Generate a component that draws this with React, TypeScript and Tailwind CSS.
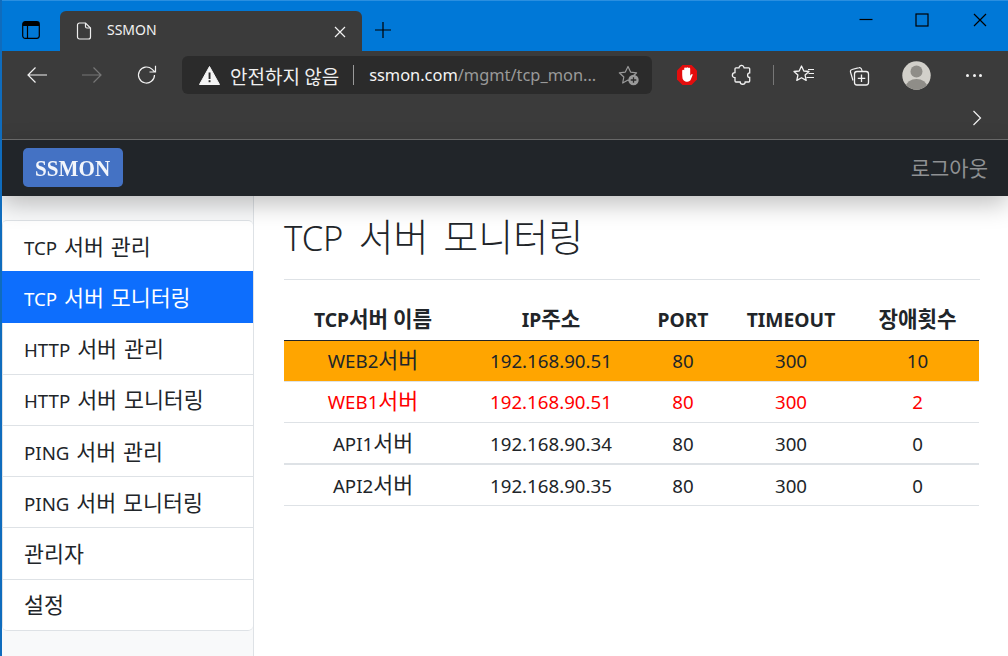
import React from "react";

const FONT = { fontFamily: '"Noto Sans", "Noto Sans CJK KR", sans-serif' };
const KR = { fontFamily: '"Noto Sans CJK KR", sans-serif' };

const Ico = ({ w = 24, h = 24, vb = "0 0 24 24", children, className = "" }: any) => (
  <svg width={w} height={h} viewBox={vb} fill="none" stroke="currentColor" strokeWidth={1.2} className={className}>
    {children}
  </svg>
);

// Hangul in the reference is set larger than the Latin beside it.
const T = ({ t, k = "text-[1.16em]" }: { t: string; k?: string }) => (
  <>
    {t.split(/([가-힣]+)/).map((s, i) =>
      /[가-힣]/.test(s) ? (
        <span key={i} className={`${k} leading-none`} style={KR}>{s}</span>
      ) : (
        <span key={i}>{s}</span>
      )
    )}
  </>
);

const menu = ["TCP 서버 관리", "TCP 서버 모니터링", "HTTP 서버 관리", "HTTP 서버 모니터링", "PING 서버 관리", "PING 서버 모니터링", "관리자", "설정"];

const rows = [
  { name: "WEB2서버", ip: "192.168.90.51", port: "80", to: "300", n: "10", cls: "bg-[#ffa500] text-[#212529] border-b", h: "h-[41px]" },
  { name: "WEB1서버", ip: "192.168.90.51", port: "80", to: "300", n: "2", cls: "text-[#ff0000] border-b", h: "h-[41px]" },
  { name: "API1서버", ip: "192.168.90.34", port: "80", to: "300", n: "0", cls: "text-[#212529] border-b-2", h: "h-[42px]" },
  { name: "API2서버", ip: "192.168.90.35", port: "80", to: "300", n: "0", cls: "text-[#212529] border-b", h: "h-[41px]" },
];

const itemHeight = (i: number) => (i === 0 ? "h-[50.250px] " : i === 1 ? "h-[52px] " : i === 7 ? "h-[50.500px] " : "h-[51.250px] ");

export default function App() {
  return (
    <div className="w-[1008px] h-[656px] overflow-hidden flex flex-col border-l-2 border-[#0f6cbd] bg-white" style={FONT}>
      {/* Tab strip */}
      <div className="h-[51px] shrink-0 bg-[#0078d7] border-t border-[#2a8fe0] flex items-end text-white">
        <div className="w-[58px] h-[50px] flex items-center justify-center pt-[8px] text-black">
          <Ico w={18} h={18} vb="0 0 18 18">
            <rect x="0.7" y="0.7" width="16.6" height="16.6" rx="2.5" fill="#0078d7" stroke="#000" strokeWidth="1.2" />
            <path d="M1 1h16v4H1z" fill="#000" stroke="none" />
            <path d="M5.5 5v12" stroke="#000" />
          </Ico>
        </div>
        <div className="w-[302px] h-[40px] bg-[#3b3b3b] rounded-t-[6px] flex items-center pl-[16px] pr-[14px] text-[#f2f2f2]">
          <Ico w={16} h={18} vb="0 0 16 18" className="mr-[15px] text-[#eeeeee]">
            <path d="M1.5 3a2 2 0 0 1 2-2h6l5 5v9a2 2 0 0 1-2 2h-9a2 2 0 0 1-2-2z" />
            <path d="M9.5 1v3.5a1.5 1.5 0 0 0 1.5 1.5h3.5" />
          </Ico>
          <span className="text-[14px] leading-none flex-1 mt-[-2px]">SSMON</span>
          <Ico w={12} h={12} vb="0 0 12 12" className="mr-[2px] mt-[2px]">
            <path d="M1 1l10 10M11 1L1 11" />
          </Ico>
        </div>
        <div className="h-[50px] w-[40px] flex items-center justify-center pt-[8px] text-black">
          <Ico w={18} h={18} vb="0 0 18 18" className="ml-[2px]">
            <path d="M9 1v16M1 9h16" />
          </Ico>
        </div>
        <div className="flex-1" />
        <div className="h-[50px] flex items-start text-black pt-[12px] pr-[21px]">
          <Ico w={14} h={14} vb="0 0 14 14" className="mr-[42px]">
            <path d="M0.5 6.5h13" />
          </Ico>
          <Ico w={14} h={14} vb="0 0 14 14" className="mr-[44px]">
            <rect x="1" y="1" width="12" height="12" />
          </Ico>
          <Ico w={14} h={14} vb="0 0 14 14" className="">
            <path d="M1 1l12 12M13 1L1 13" />
          </Ico>
        </div>
      </div>

      {/* Address toolbar */}
      <div className="h-[49px] shrink-0 bg-[#3b3b3b] flex items-center text-[#f2f2f2] pb-[1px]">
        <Ico w={22} h={18} vb="0 0 22 18" className="ml-[24px]">
          <path d="M21 9H2M9.5 1.5L2 9l7.5 7.5" />
        </Ico>
        <Ico w={22} h={18} vb="0 0 22 18" className="ml-[33px] text-[#777777]">
          <path d="M1 9h19M12.5 1.5L20 9l-7.5 7.5" />
        </Ico>
        <Ico w={22} h={22} vb="0 0 22 22" className="ml-[33px]">
          <path d="M18.5 11a8 8 0 1 1-2.6-5.9l3.1 2.9M19.5 1.8V8h-6" />
        </Ico>
        <div className="ml-[24px] w-[470px] h-[38px] rounded-[6px] bg-[#2b2b2b] flex items-center pl-[17px] pr-[12px]">
          <svg width="21" height="19" viewBox="0 0 21 19" className="shrink-0">
            <path d="M10.5 0.5L20.5 18.5H0.5z" fill="#f5f5f5" stroke="#f5f5f5" strokeLinejoin="round" />
            <rect x="9.6" y="6.5" width="1.9" height="6.5" fill="#2b2b2b" />
            <rect x="9.6" y="14.2" width="1.9" height="2" fill="#2b2b2b" />
          </svg>
          <span className="ml-[10px] text-[19px] leading-none text-[#f0f0f0] whitespace-nowrap" style={KR}>안전하지 않음</span>
          <span className="ml-[14px] w-[1px] h-[20px] bg-[#9a9a9a] shrink-0" />
          <span className="ml-[15px] text-[16.4px] leading-normal whitespace-nowrap flex-1">
            <span className="text-[#f5f5f5]">ssmon.com</span>
            <span className="text-[#9a9a9a]">/mgmt/tcp_mon...</span>
          </span>
          <svg width="22" height="21" viewBox="0 0 22 21" fill="none" className="shrink-0">
            <path d="M10 1.5l2.6 5.6 6 .7-4.4 4.2 1.1 6-5.3-3-5.3 3 1.1-6L1.300 7.800l6-.7z" stroke="#9a9a9a" strokeWidth="1.200" strokeLinejoin="round" />
            <circle cx="15.500" cy="15" r="5.200" fill="#9a9a9a" />
            <path d="M15.500 12.200v5.600M12.700 15h5.600" stroke="#2b2b2b" strokeWidth="1.300" />
          </svg>
        </div>
        <svg width="22" height="22" viewBox="0 0 22 22" className="ml-[24px] shrink-0">
          <path d="M6.500 1h9L21 6.500v9L15.500 21h-9L1 15.500v-9z" fill="#e30d0d" />
          <path d="M6.200 11V6.800a1.100 1.100 0 0 1 2-.5V4.500a1.100 1.100 0 0 1 2-.6 1.100 1.100 0 0 1 2 .2 1.100 1.100 0 0 1 2 .8v7.200c.4-1 1-2 2-2 .5.200.5.800.2 1.400l-1.600 4c-.6 1.400-1.800 2.200-3.400 2.200-2.900 0-5-1.800-5-4.500z" fill="#fff" />
        </svg>
        <Ico w={22} h={22} vb="0 0 22 22" className="ml-[33px] shrink-0">
          <path d="M8 3.300a2.500 2.500 0 0 1 4.800-.8l.3.8h4.600c.6 0 1 .4 1 1v4c-2.800 0-2.800 4.700 0 4.700v3.500c0 .6-.4 1-1 1h-3.500c0 3-5 3-5 0H5c-.6 0-1-.4-1-1v-3.300c-3.500 0-3.500-5 0-5V4.300c0-.6.400-1 1-1z" strokeWidth="1.300" transform="translate(0 0.500)" />
        </Ico>
        <span className="ml-[20px] w-[1px] h-[20px] bg-[#777777] shrink-0" />
        <Ico w={22} h={22} vb="0 0 22 22" className="ml-[19px] shrink-0">
          <path d="M8.500 2l2.300 5 5.200.5-3.900 3.600 1.100 5.300-4.700-2.700-4.700 2.700 1.100-5.300L1 7.500l5.200-.5z" strokeLinejoin="round" strokeWidth="1.300" />
          <path d="M15 5.500h6M15.500 9.500h5.500M13.500 13.500H21" strokeWidth="1.200" />
        </Ico>
        <Ico w={22} h={22} vb="0 0 22 22" className="ml-[33px] shrink-0">
          <path d="M5 16.500L2.500 8A2 2 0 0 1 4 5.500l7-1.800a2 2 0 0 1 2.500 1.500l.6 2" strokeWidth="1.200" />
          <rect x="6.500" y="7.500" width="14" height="13.500" rx="2.500" strokeWidth="1.300" />
          <path d="M13.500 10.500v7.500M9.800 14.300h7.500" strokeWidth="1.300" />
        </Ico>
        <svg width="29" height="29" viewBox="0 0 29 29" className="ml-[32px] shrink-0">
          <defs>
            <clipPath id="av"><circle cx="14.500" cy="14.500" r="14.200" /></clipPath>
          </defs>
          <circle cx="14.500" cy="14.500" r="14.200" fill="#d2d0ca" />
          <g clipPath="url(#av)">
            <circle cx="14.500" cy="10.500" r="6" fill="#8f8d88" />
            <ellipse cx="14.500" cy="25.500" rx="10.500" ry="7.500" fill="#8f8d88" />
          </g>
        </svg>
        <div className="ml-[35px] flex gap-[3.500px] shrink-0">
          <span className="w-[3px] h-[3px] rounded-full bg-[#f2f2f2]" />
          <span className="w-[3px] h-[3px] rounded-full bg-[#f2f2f2]" />
          <span className="w-[3px] h-[3px] rounded-full bg-[#f2f2f2]" />
        </div>
      </div>

      {/* Favourites bar */}
      <div className="h-[40px] shrink-0 bg-[#3b3b3b] border-b border-[#6e6e6e] flex items-center justify-end pr-[26px] text-[#f2f2f2]">
        <Ico w={10} h={16} vb="0 0 10 16" className="mb-[4px]">
          <path d="M1.500 1l7 7-7 7" />
        </Ico>
      </div>

      {/* Navbar */}
      <nav className="relative z-10 h-[56px] shrink-0 bg-[#212529] flex items-center justify-between pl-[21px] pr-[20px] shadow-[0_8px_24px_rgba(0,0,0,0.25)]">
        <div className="w-[100px] h-[39px] mt-[-1px] rounded-[5px] bg-[#4472c4] flex items-center justify-center">
          <span className="text-[#f2f5fb] text-[24px] font-bold leading-none blur-[0.5px] scale-x-[0.88]" style={{ fontFamily: '"Liberation Serif", serif' }}>SSMON</span>
        </div>
        <span className="text-[21px] leading-none text-[#8f9193] mb-[1px]" style={KR}>로그아웃</span>
      </nav>

      {/* Body */}
      <div className="flex-1 flex min-h-0">
        <aside className="w-[252px] shrink-0 bg-[#f8f9fa] border-r border-[#dee2e6] pt-[24px]">
          <div className="bg-white border-y border-[#dee2e6] rounded-[5px] overflow-hidden text-[18.7px] text-[#212529] [word-spacing:2px]">
            {menu.map((m, i) => (
              <div
                key={m}
                className={
                  "flex items-center leading-none " +
                  itemHeight(i) +
                  (i === 1 ? "bg-[#0d6efd] text-white pl-[22px] " : "border-l border-[#dee2e6] pl-[21px] ") +
                  (i >= 2 ? "border-b last:border-b-0 " : "")
                }
              >
                <span><T t={m} /></span>
              </div>
            ))}
          </div>
        </aside>

        <main className="flex-1 min-w-0 pl-[30px] pr-[28px]">
          <h1 className="h-[84px] border-b border-[#dee2e6] text-[34.500px] font-light leading-none text-[#212529] pt-[20px] [word-spacing:6px]">
            <T t="TCP 서버 모니터링" k="text-[38px]" />
          </h1>
          <table className="w-[695px] mt-[19px] table-fixed border-collapse text-center text-[18.700px] text-[#212529]">
            <colgroup>
              <col className="w-[178px]" />
              <col className="w-[178px]" />
              <col className="w-[86px]" />
              <col className="w-[130px]" />
              <col className="w-[123px]" />
            </colgroup>
            <thead>
              <tr className="h-[41px] border-b border-[#212529] font-bold text-[19.300px]">
                <th className="pt-[2px]"><T t="TCP서버 이름" k="text-[1.1em]" /></th>
                <th className="pt-[2px]"><T t="IP주소" k="text-[1.1em]" /></th>
                <th className="pt-[2px]">PORT</th>
                <th className="pt-[2px]">TIMEOUT</th>
                <th className="pt-[2px]"><T t="장애횟수" k="text-[1.1em]" /></th>
              </tr>
            </thead>
            <tbody>
              {rows.map((r) => (
                <tr key={r.name} className={`${r.h} border-[#dee2e6] ${r.cls}`}>
                  <td className="pt-[2px]"><T t={r.name} /></td>
                  <td className="pt-[2px]">{r.ip}</td>
                  <td className="pt-[2px]">{r.port}</td>
                  <td className="pt-[2px]">{r.to}</td>
                  <td className="pt-[2px]">{r.n}</td>
                </tr>
              ))}
            </tbody>
          </table>
        </main>
      </div>
    </div>
  );
}
